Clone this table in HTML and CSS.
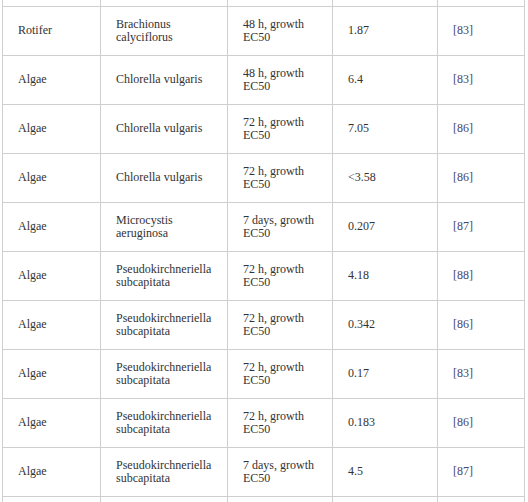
FILE: index.html
```html
<!DOCTYPE html>
<html>
<head>
<meta charset="utf-8">
<link rel="stylesheet" href="styles.css">
</head>
<body>
<table class="data">
<colgroup>
<col class="c1"><col class="c2"><col class="c3"><col class="c4"><col class="c5">
</colgroup>
<tbody>
<tr class="cut"><td></td><td></td><td></td><td></td><td></td></tr>
<tr><td>Rotifer</td><td>Brachionus calyciflorus</td><td>48 h, growth EC50</td><td>1.87</td><td><a class="ref">[83]</a></td></tr>
<tr><td>Algae</td><td>Chlorella vulgaris</td><td>48 h, growth EC50</td><td>6.4</td><td><a class="ref">[83]</a></td></tr>
<tr><td>Algae</td><td>Chlorella vulgaris</td><td>72 h, growth EC50</td><td>7.05</td><td><a class="ref">[86]</a></td></tr>
<tr><td>Algae</td><td>Chlorella vulgaris</td><td>72 h, growth EC50</td><td>&lt;3.58</td><td><a class="ref">[86]</a></td></tr>
<tr><td>Algae</td><td>Microcystis aeruginosa</td><td>7 days, growth EC50</td><td>0.207</td><td><a class="ref">[87]</a></td></tr>
<tr><td>Algae</td><td>Pseudokirchneriella subcapitata</td><td>72 h, growth EC50</td><td>4.18</td><td><a class="ref">[88]</a></td></tr>
<tr><td>Algae</td><td>Pseudokirchneriella subcapitata</td><td>72 h, growth EC50</td><td>0.342</td><td><a class="ref">[86]</a></td></tr>
<tr><td>Algae</td><td>Pseudokirchneriella subcapitata</td><td>72 h, growth EC50</td><td>0.17</td><td><a class="ref">[83]</a></td></tr>
<tr><td>Algae</td><td>Pseudokirchneriella subcapitata</td><td>72 h, growth EC50</td><td>0.183</td><td><a class="ref">[86]</a></td></tr>
<tr><td>Algae</td><td>Pseudokirchneriella subcapitata</td><td>7 days, growth EC50</td><td>4.5</td><td><a class="ref">[87]</a></td></tr>
<tr><td></td><td></td><td></td><td></td><td></td></tr>
</tbody>
</table>
</body>
</html>
```
FILE: styles.css
```css
html, body {
  margin: 0;
  padding: 0;
  background: #fff;
  overflow: hidden;
}
body {
  padding-left: 2px;
  font-family: "Liberation Serif", "Times New Roman", serif;
  font-size: 12px;
  color: #333;
}
.data {
  border-collapse: collapse;
  table-layout: fixed;
  width: 523px;
}
.c1 { width: 98px; }
.c2 { width: 127px; }
.c3 { width: 105px; }
.c4 { width: 105px; }
.c5 { width: 87px; }
.data td {
  border: 1px solid #cfcfcf;
  height: 49px;
  padding: 0 8px 0 15px;
  line-height: 13px;
  vertical-align: middle;
  box-sizing: border-box;
}
.data tr.cut td {
  border-top: none;
  height: 6px;
}
.ref {
  color: #464668;
  text-decoration: none;
}
```
